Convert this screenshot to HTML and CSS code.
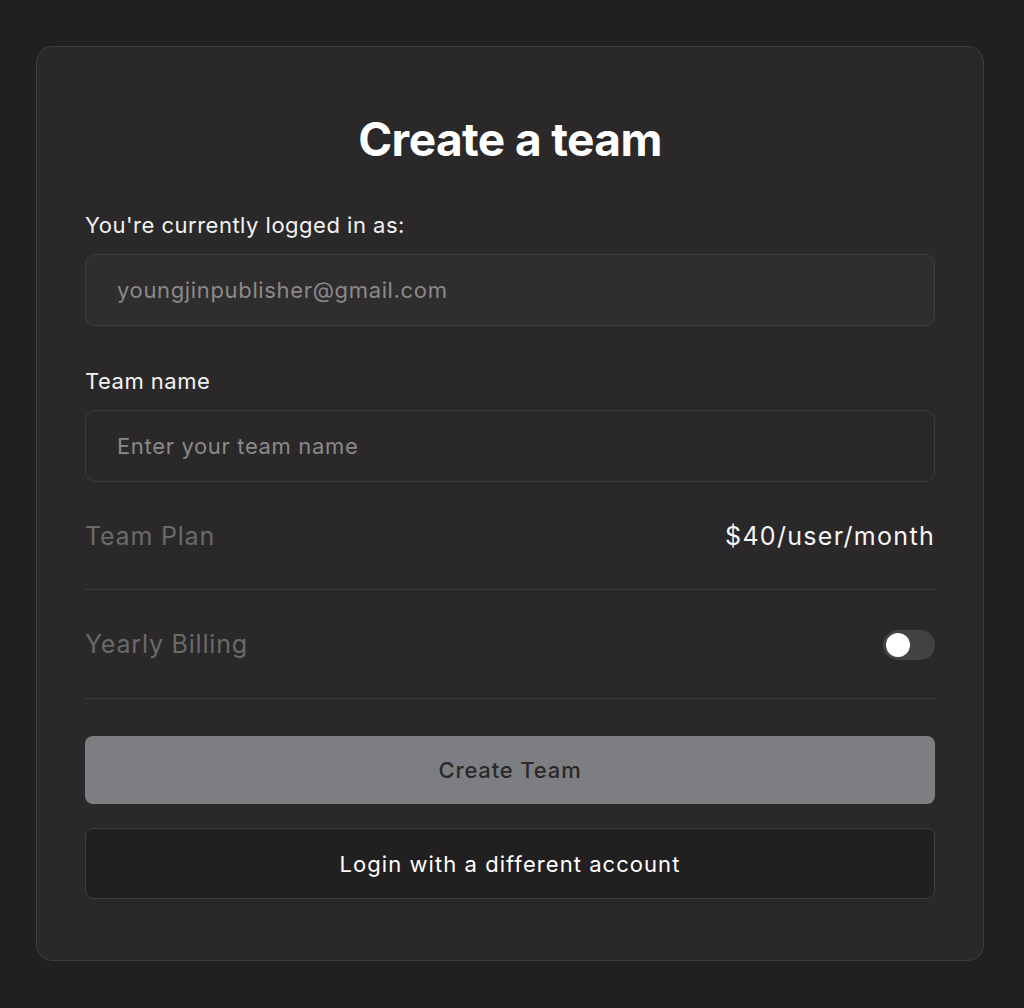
FILE: index.html
```html
<!DOCTYPE html>
<html>
<head>
<meta charset="utf-8">
<link rel="stylesheet" href="styles.css">
</head>
<body>
<div class="card">
  <h1 class="title">Create a team</h1>
  <div class="field">
    <div class="label">You're currently logged in as:</div>
    <div class="input filled">youngjinpublisher@gmail.com</div>
  </div>
  <div class="field">
    <div class="label">Team name</div>
    <div class="input">Enter your team name</div>
  </div>
  <div class="row">
    <span class="row-label">Team Plan</span>
    <span class="row-value">$40/user/month</span>
  </div>
  <div class="row">
    <span class="row-label">Yearly Billing</span>
    <span class="toggle"><span class="knob"></span></span>
  </div>
  <div class="btn primary">Create Team</div>
  <div class="btn secondary">Login with a different account</div>
</div>
</body>
</html>
```
FILE: styles.css
```css
html, body { margin: 0; padding: 0; }
body {
  background: #221f20;
  font-family: Inter, "Noto Sans", sans-serif;
  padding: 46px 40px 0 36px;
  height: 1008px;
  box-sizing: border-box;
}
.card {
  width: 948px;
  height: 915px;
  box-sizing: border-box;
  background: #2a2829;
  border: 1px solid #3f3d3e;
  border-radius: 16px;
  padding: 64px 48px 0 48px;
  display: flex;
  flex-direction: column;
}
.title {
  margin: 0 0 44px 0;
  text-align: center;
  color: #ffffff;
  font-size: 46px;
  font-weight: 700;
  letter-spacing: -0.6px;
  line-height: 56px;
}
.field { display: flex; flex-direction: column; margin-bottom: 41px; }
.field:nth-of-type(2) { margin-bottom: 0; }
.label {
  color: #f2f2f2;
  font-size: 22px;
  letter-spacing: 0.5px;
  line-height: 28px;
  margin-bottom: 15px;
}
.input {
  height: 72px;
  box-sizing: border-box;
  border: 1px solid #3f3d3e;
  border-radius: 10px;
  background: #2a2829;
  color: #8a898a;
  font-size: 22px;
  letter-spacing: 0.65px;
  padding: 0 31px;
  display: flex;
  align-items: center;
}
.input.filled { background: #2f2d2e; }
.row {
  display: flex;
  justify-content: space-between;
  align-items: center;
  height: 109px;
  border-bottom: 1px solid #3f3d3e;
  box-sizing: border-box;
}
.field + .row { height: 108px; align-items: center; }
.row-label { color: #6b6a6b; font-size: 25px; letter-spacing: 0.8px; }
.row-value { color: #f5f5f5; font-size: 25px; letter-spacing: 1.3px; }
.toggle {
  width: 52px;
  height: 30px;
  margin-top: 2px;
  border-radius: 15px;
  background: #434244;
  position: relative;
}
.knob {
  position: absolute;
  left: 3px;
  top: 3px;
  width: 24px;
  height: 24px;
  border-radius: 50%;
  background: #ffffff;
}
.btn {
  display: flex;
  align-items: center;
  justify-content: center;
  box-sizing: border-box;
  border-radius: 8px;
  font-size: 22px;
  font-weight: 500;
  letter-spacing: 0.85px;
}
.btn.primary {
  margin-top: 37px;
  height: 68px;
  background: #7d7e82;
  color: #2a2829;
}
.btn.secondary {
  margin-top: 24px;
  height: 71px;
  background: #221f20;
  border: 1px solid #3f3d3e;
  color: #ffffff;
  font-weight: 400;
  letter-spacing: 1.05px;
}
```
